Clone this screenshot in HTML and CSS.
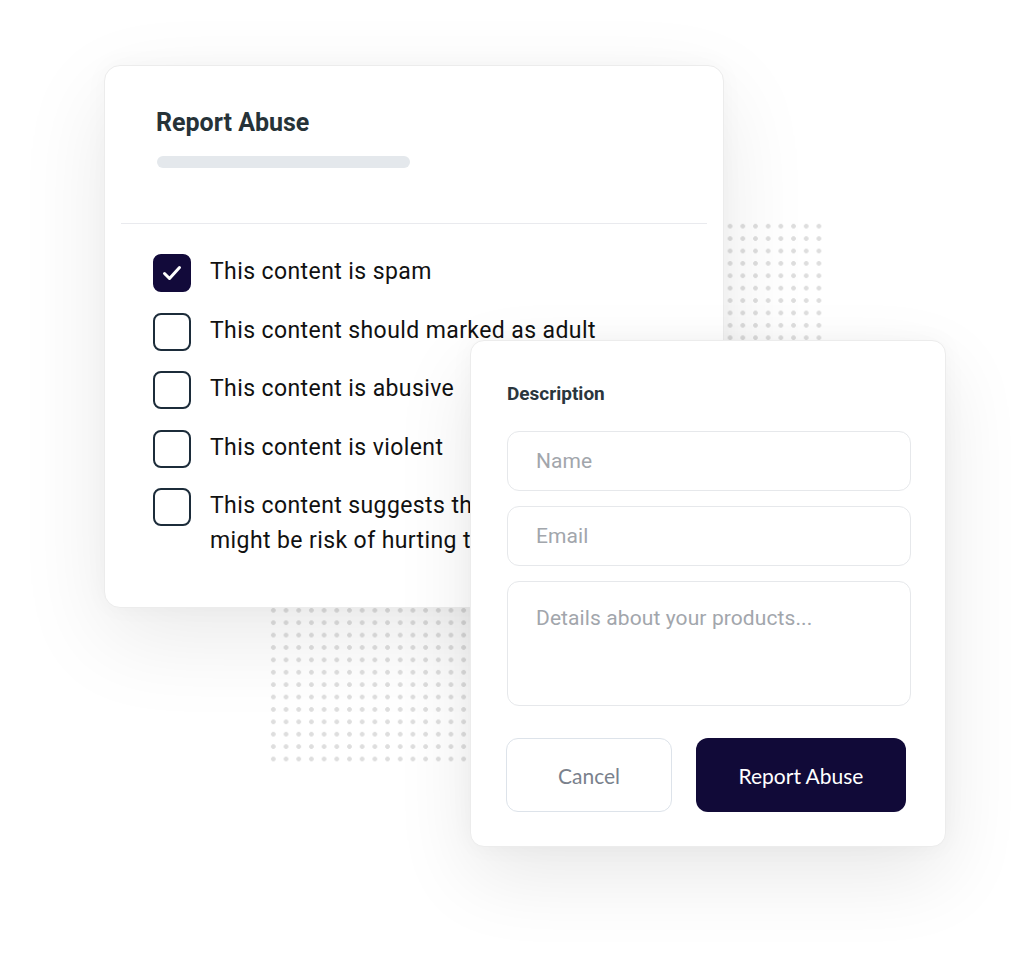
FILE: index.html
```html
<!DOCTYPE html>
<html>
<head>
  <meta charset="utf-8">
  <title>Report Abuse</title>
  <link rel="stylesheet" href="styles.css">
</head>
<body>
  <div class="scene">
    <div class="dots"></div>

    <section class="card report-card">
      <div class="report-head">
        <h1>Report Abuse</h1>
        <div class="bar"></div>
      </div>
      <hr class="divider">
      <ul class="options">
        <li class="option">
          <span class="box checked">
            <svg viewBox="0 0 38 38" width="38" height="38"><polyline points="11.5,19.5 16.5,24.5 26.5,13.5" fill="none" stroke="#fff" stroke-width="3" stroke-linecap="round" stroke-linejoin="round"/></svg>
          </span>
          <span class="option-text">This content is spam</span>
        </li>
        <li class="option">
          <span class="box"></span>
          <span class="option-text">This content should marked as adult</span>
        </li>
        <li class="option">
          <span class="box"></span>
          <span class="option-text">This content is abusive</span>
        </li>
        <li class="option">
          <span class="box"></span>
          <span class="option-text">This content is violent</span>
        </li>
        <li class="option">
          <span class="box"></span>
          <span class="option-text">This content suggests that there might be risk of hurting themselves</span>
        </li>
      </ul>
    </section>

    <section class="card form-card">
      <h2>Description</h2>
      <form class="fields" onsubmit="return false">
        <input type="text" class="field" placeholder="Name">
        <input type="text" class="field" placeholder="Email">
        <textarea class="field area" placeholder="Details about your products..."></textarea>
        <div class="actions">
          <button type="button" class="btn btn-cancel">Cancel</button>
          <button type="submit" class="btn btn-report">Report Abuse</button>
        </div>
      </form>
    </section>
  </div>
</body>
</html>
```

FILE: styles.css
```css
body {
  margin: 0;
  background: #fff;
  font-family: Roboto, "Noto Sans", Arial, sans-serif;
}

.scene {
  position: relative;
  width: 1024px;
  height: 955px;
  overflow: hidden;
}

.dots {
  position: absolute;
  left: 267px;
  top: 220px;
  width: 559px;
  height: 546px;
  background-image: radial-gradient(circle, #dedede 2px, transparent 2.6px);
  background-size: 12.7px 12.4px;
}

.card {
  position: absolute;
  box-sizing: border-box;
  background: #fff;
  border: 1px solid #ececec;
  border-radius: 16px;
  box-shadow: 0 30px 90px rgba(0, 0, 0, 0.085), 0 0 24px rgba(0, 0, 0, 0.03);
}

/* left card */

.report-card {
  left: 104px;
  top: 65px;
  width: 620px;
  height: 543px;
  padding: 0 16px;
}

.report-head {
  padding: 42px 0 0 35px;
  height: 116px;
  box-sizing: border-box;
}

h1 {
  margin: 0;
  font-size: 25px;
  line-height: 30px;
  font-weight: 700;
  color: #263238;
}

.bar {
  margin-top: 18px;
  margin-left: 1px;
  width: 253px;
  height: 12px;
  border-radius: 6px;
  background: #e4e8ec;
}

.divider {
  margin: 41px 0 0;
  border: 0;
  border-top: 1.5px solid #e9eaee;
}

.options {
  list-style: none;
  margin: 0;
  padding: 30px 0 0 32px;
  display: flex;
  flex-direction: column;
  gap: 20.5px;
}

.option {
  display: flex;
  align-items: flex-start;
  gap: 19px;
}

.box {
  flex: none;
  width: 38px;
  height: 38px;
  box-sizing: border-box;
  border: 2px solid #1c2c3a;
  border-radius: 8px;
}

.box.checked {
  background: #120a3a;
  border-color: #120a3a;
}

.box svg {
  display: block;
  margin: -2px;
}

.option-text {
  width: 400px;
  font-size: 23px;
  line-height: 35px;
  letter-spacing: 0.4px;
  color: #111;
}

/* right card */

.form-card {
  left: 470px;
  top: 340px;
  width: 476px;
  height: 507px;
  border-radius: 14px;
  padding: 42px 36px 0 36px;
  box-shadow: 0 30px 80px rgba(0, 0, 0, 0.09), 0 0 24px rgba(0, 0, 0, 0.035);
}

h2 {
  margin: 0 0 26px;
  font-size: 19px;
  line-height: 22px;
  font-weight: 700;
  color: #2a363d;
}

.fields {
  display: flex;
  flex-direction: column;
  gap: 15px;
}

.field {
  box-sizing: border-box;
  width: 404px;
  height: 60px;
  margin: 0;
  padding: 0 28px;
  border: 1.5px solid #e6e8eb;
  border-radius: 12px;
  font-family: Roboto, Arial, sans-serif;
  font-size: 21px;
  letter-spacing: 0.1px;
  color: #333;
  outline: none;
}

.field::placeholder {
  color: #a2a6ac;
}

.area {
  height: 125px;
  padding: 22px 28px;
  line-height: 28px;
  resize: none;
}

.actions {
  display: flex;
  gap: 24px;
  margin: 17px 0 0 -1px;
}

.btn {
  height: 74px;
  border-radius: 12px;
  font-family: Lato, Arial, sans-serif;
  font-size: 21px;
  cursor: pointer;
}

.btn-cancel {
  width: 166px;
  background: #fff;
  border: 1.5px solid #dde3ea;
  color: #7a818c;
}

.btn-report {
  width: 210px;
  background: #110a38;
  border: 0;
  color: #fff;
}
```
